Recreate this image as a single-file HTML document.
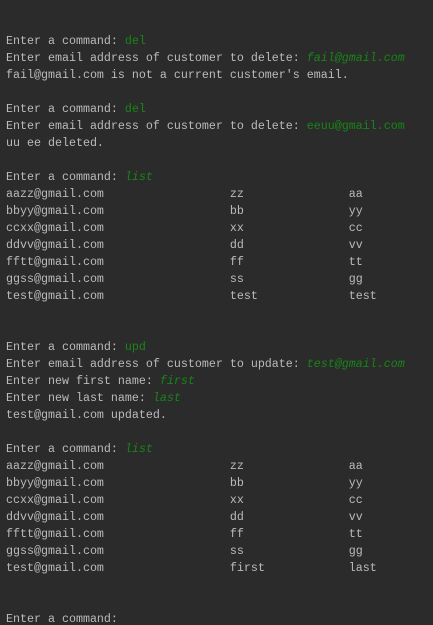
<!DOCTYPE html>
<html><head><meta charset="utf-8"><style>
html,body{margin:0;padding:0;background:#2b2b2b;width:433px;height:625px;overflow:hidden}
pre{margin:0;padding:33px 0 0 6px;font-family:"Liberation Mono",monospace;font-size:11.67px;line-height:17px;color:#bbbbbb}
.g{color:#178517}
.i{color:#178517;font-style:italic}
</style></head><body><pre>Enter a command: <span class="g">del</span>
Enter email address of customer to delete: <span class="i">fail@gmail.com</span>
fail@gmail.com is not a current customer's email.

Enter a command: <span class="g">del</span>
Enter email address of customer to delete: <span class="g">eeuu@gmail.com</span>
uu ee deleted.

Enter a command: <span class="i">list</span>
aazz@gmail.com                  zz               aa
bbyy@gmail.com                  bb               yy
ccxx@gmail.com                  xx               cc
ddvv@gmail.com                  dd               vv
fftt@gmail.com                  ff               tt
ggss@gmail.com                  ss               gg
test@gmail.com                  test             test


Enter a command: <span class="g">upd</span>
Enter email address of customer to update: <span class="i">test@gmail.com</span>
Enter new first name: <span class="i">first</span>
Enter new last name: <span class="i">last</span>
test@gmail.com updated.

Enter a command: <span class="i">list</span>
aazz@gmail.com                  zz               aa
bbyy@gmail.com                  bb               yy
ccxx@gmail.com                  xx               cc
ddvv@gmail.com                  dd               vv
fftt@gmail.com                  ff               tt
ggss@gmail.com                  ss               gg
test@gmail.com                  first            last


Enter a command: </pre></body></html>
